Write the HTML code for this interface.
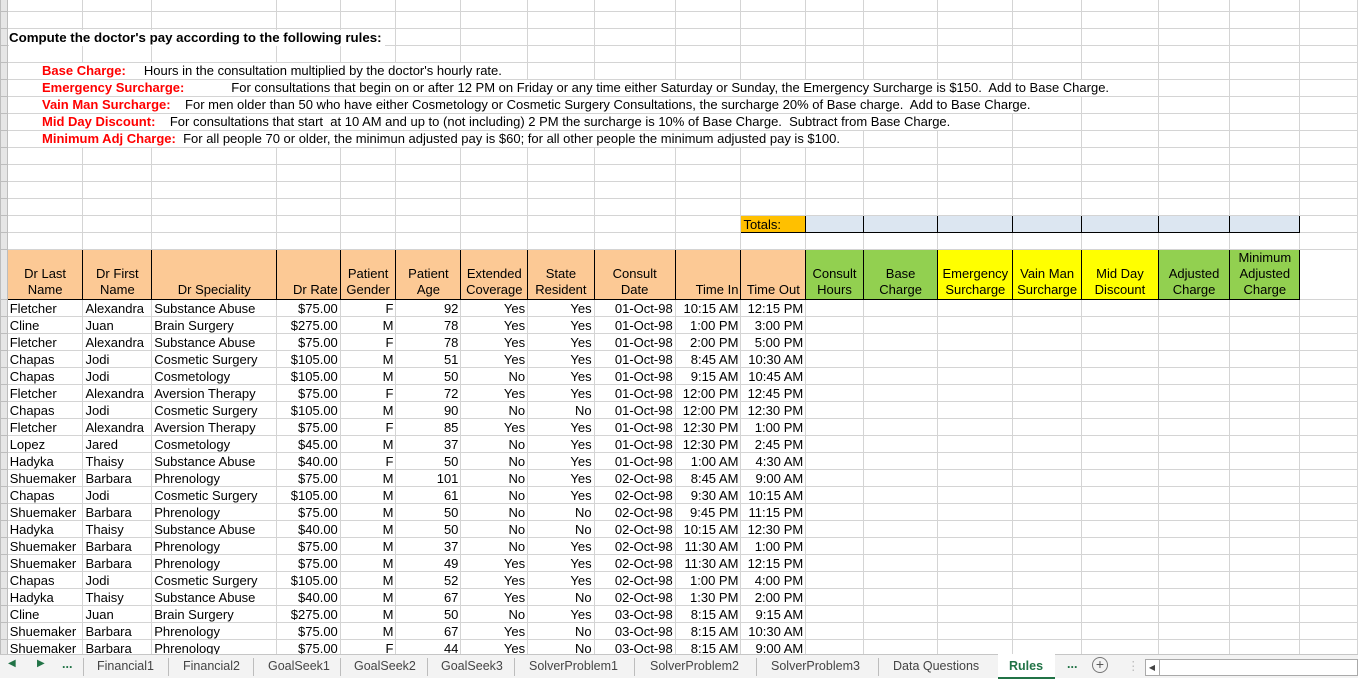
<!DOCTYPE html>
<html><head><meta charset="utf-8"><style>
*{margin:0;padding:0;box-sizing:border-box}
body{width:1358px;height:678px;overflow:hidden;background:#fff;font-family:"Liberation Sans",Arial,sans-serif;font-size:13px;color:#000;position:relative}
table{position:absolute;left:0;top:-6px;border-collapse:collapse;table-layout:fixed}
td{border:1px solid #d4d4d4;height:17px;padding:0 2px;white-space:nowrap;overflow:hidden;line-height:15px;font-size:13px}
td.rh{background:#e6e6e6;border-color:#bdbdbd;padding:0}
.r{text-align:right}
tr.hd td.h{border:1px solid #000;vertical-align:bottom;text-align:center;line-height:16px;white-space:normal;padding-bottom:1px}
.or{background:#fcc995}
.gr{background:#92d050}
.ye{background:#ffff00}
.tot{background:#ffc000;border:1px solid #000!important}
.tb{background:#dce6f1;border:1px solid #000!important}
.ov{position:absolute;background:#fff;white-space:pre;line-height:16px;height:16px}
.lab{color:#ff0000;font-weight:bold;font-size:13px}
.tx{font-size:13px}
#tabs{position:absolute;left:0;top:654px;width:1358px;height:24px;background:#f3f3f3;border-top:1px solid #c6c6c6;font-size:12.5px;color:#444}
#tabs span{position:absolute;top:4px}
.sep{position:absolute;top:3px;width:1px;height:18px;background:#bdbdbd}
</style></head><body>
<table>
<colgroup><col style="width:7px"><col style="width:76px"><col style="width:69px"><col style="width:126px"><col style="width:64px"><col style="width:56px"><col style="width:66px"><col style="width:67px"><col style="width:67px"><col style="width:82px"><col style="width:66px"><col style="width:65px"><col style="width:58px"><col style="width:76px"><col style="width:75px"><col style="width:69px"><col style="width:78px"><col style="width:72px"><col style="width:71px"><col style="width:60px"></colgroup>
<tr><td class="rh"></td><td></td><td></td><td></td><td></td><td></td><td></td><td></td><td></td><td></td><td></td><td></td><td></td><td></td><td></td><td></td><td></td><td></td><td></td><td></td></tr>
<tr><td class="rh"></td><td></td><td></td><td></td><td></td><td></td><td></td><td></td><td></td><td></td><td></td><td></td><td></td><td></td><td></td><td></td><td></td><td></td><td></td><td></td></tr>
<tr><td class="rh"></td><td></td><td></td><td></td><td></td><td></td><td></td><td></td><td></td><td></td><td></td><td></td><td></td><td></td><td></td><td></td><td></td><td></td><td></td><td></td></tr>
<tr><td class="rh"></td><td></td><td></td><td></td><td></td><td></td><td></td><td></td><td></td><td></td><td></td><td></td><td></td><td></td><td></td><td></td><td></td><td></td><td></td><td></td></tr>
<tr><td class="rh"></td><td></td><td></td><td></td><td></td><td></td><td></td><td></td><td></td><td></td><td></td><td></td><td></td><td></td><td></td><td></td><td></td><td></td><td></td><td></td></tr>
<tr><td class="rh"></td><td></td><td></td><td></td><td></td><td></td><td></td><td></td><td></td><td></td><td></td><td></td><td></td><td></td><td></td><td></td><td></td><td></td><td></td><td></td></tr>
<tr><td class="rh"></td><td></td><td></td><td></td><td></td><td></td><td></td><td></td><td></td><td></td><td></td><td></td><td></td><td></td><td></td><td></td><td></td><td></td><td></td><td></td></tr>
<tr><td class="rh"></td><td></td><td></td><td></td><td></td><td></td><td></td><td></td><td></td><td></td><td></td><td></td><td></td><td></td><td></td><td></td><td></td><td></td><td></td><td></td></tr>
<tr><td class="rh"></td><td></td><td></td><td></td><td></td><td></td><td></td><td></td><td></td><td></td><td></td><td></td><td></td><td></td><td></td><td></td><td></td><td></td><td></td><td></td></tr>
<tr><td class="rh"></td><td></td><td></td><td></td><td></td><td></td><td></td><td></td><td></td><td></td><td></td><td></td><td></td><td></td><td></td><td></td><td></td><td></td><td></td><td></td></tr>
<tr><td class="rh"></td><td></td><td></td><td></td><td></td><td></td><td></td><td></td><td></td><td></td><td></td><td></td><td></td><td></td><td></td><td></td><td></td><td></td><td></td><td></td></tr>
<tr><td class="rh"></td><td></td><td></td><td></td><td></td><td></td><td></td><td></td><td></td><td></td><td></td><td></td><td></td><td></td><td></td><td></td><td></td><td></td><td></td><td></td></tr>
<tr><td class="rh"></td><td></td><td></td><td></td><td></td><td></td><td></td><td></td><td></td><td></td><td></td><td></td><td></td><td></td><td></td><td></td><td></td><td></td><td></td><td></td></tr>
<tr><td class="rh"></td><td></td><td></td><td></td><td></td><td></td><td></td><td></td><td></td><td></td><td></td><td class="tot">Totals:</td><td class="tb"></td><td class="tb"></td><td class="tb"></td><td class="tb"></td><td class="tb"></td><td class="tb"></td><td class="tb"></td><td></td></tr>
<tr><td class="rh"></td><td></td><td></td><td></td><td></td><td></td><td></td><td></td><td></td><td></td><td></td><td></td><td></td><td></td><td></td><td></td><td></td><td></td><td></td><td></td></tr>
<tr class="hd" style="height:49px"><td class="rh" style="height:49px"></td><td class="h or">Dr Last<br>Name</td><td class="h or">Dr First<br>Name</td><td class="h or">Dr Speciality</td><td class="h or" style="text-align:right">Dr Rate</td><td class="h or">Patient<br>Gender</td><td class="h or">Patient<br>Age</td><td class="h or">Extended<br>Coverage</td><td class="h or">State<br>Resident</td><td class="h or">Consult<br>Date</td><td class="h or" style="text-align:right">Time In</td><td class="h or">Time Out</td><td class="h gr">Consult<br>Hours</td><td class="h gr">Base<br>Charge</td><td class="h ye">Emergency<br>Surcharge</td><td class="h ye">Vain Man<br>Surcharge</td><td class="h ye">Mid Day<br>Discount</td><td class="h gr">Adjusted<br>Charge</td><td class="h gr">Minimum<br>Adjusted<br>Charge</td><td></td></tr>
<tr><td class="rh"></td><td>Fletcher</td><td>Alexandra</td><td>Substance Abuse</td><td class="r">$75.00</td><td class="r">F</td><td class="r">92</td><td class="r">Yes</td><td class="r">Yes</td><td class="r">01-Oct-98</td><td class="r">10:15 AM</td><td class="r">12:15 PM</td><td></td><td></td><td></td><td></td><td></td><td></td><td></td><td></td></tr>
<tr><td class="rh"></td><td>Cline</td><td>Juan</td><td>Brain Surgery</td><td class="r">$275.00</td><td class="r">M</td><td class="r">78</td><td class="r">Yes</td><td class="r">Yes</td><td class="r">01-Oct-98</td><td class="r">1:00 PM</td><td class="r">3:00 PM</td><td></td><td></td><td></td><td></td><td></td><td></td><td></td><td></td></tr>
<tr><td class="rh"></td><td>Fletcher</td><td>Alexandra</td><td>Substance Abuse</td><td class="r">$75.00</td><td class="r">F</td><td class="r">78</td><td class="r">Yes</td><td class="r">Yes</td><td class="r">01-Oct-98</td><td class="r">2:00 PM</td><td class="r">5:00 PM</td><td></td><td></td><td></td><td></td><td></td><td></td><td></td><td></td></tr>
<tr><td class="rh"></td><td>Chapas</td><td>Jodi</td><td>Cosmetic Surgery</td><td class="r">$105.00</td><td class="r">M</td><td class="r">51</td><td class="r">Yes</td><td class="r">Yes</td><td class="r">01-Oct-98</td><td class="r">8:45 AM</td><td class="r">10:30 AM</td><td></td><td></td><td></td><td></td><td></td><td></td><td></td><td></td></tr>
<tr><td class="rh"></td><td>Chapas</td><td>Jodi</td><td>Cosmetology</td><td class="r">$105.00</td><td class="r">M</td><td class="r">50</td><td class="r">No</td><td class="r">Yes</td><td class="r">01-Oct-98</td><td class="r">9:15 AM</td><td class="r">10:45 AM</td><td></td><td></td><td></td><td></td><td></td><td></td><td></td><td></td></tr>
<tr><td class="rh"></td><td>Fletcher</td><td>Alexandra</td><td>Aversion Therapy</td><td class="r">$75.00</td><td class="r">F</td><td class="r">72</td><td class="r">Yes</td><td class="r">Yes</td><td class="r">01-Oct-98</td><td class="r">12:00 PM</td><td class="r">12:45 PM</td><td></td><td></td><td></td><td></td><td></td><td></td><td></td><td></td></tr>
<tr><td class="rh"></td><td>Chapas</td><td>Jodi</td><td>Cosmetic Surgery</td><td class="r">$105.00</td><td class="r">M</td><td class="r">90</td><td class="r">No</td><td class="r">No</td><td class="r">01-Oct-98</td><td class="r">12:00 PM</td><td class="r">12:30 PM</td><td></td><td></td><td></td><td></td><td></td><td></td><td></td><td></td></tr>
<tr><td class="rh"></td><td>Fletcher</td><td>Alexandra</td><td>Aversion Therapy</td><td class="r">$75.00</td><td class="r">F</td><td class="r">85</td><td class="r">Yes</td><td class="r">Yes</td><td class="r">01-Oct-98</td><td class="r">12:30 PM</td><td class="r">1:00 PM</td><td></td><td></td><td></td><td></td><td></td><td></td><td></td><td></td></tr>
<tr><td class="rh"></td><td>Lopez</td><td>Jared</td><td>Cosmetology</td><td class="r">$45.00</td><td class="r">M</td><td class="r">37</td><td class="r">No</td><td class="r">Yes</td><td class="r">01-Oct-98</td><td class="r">12:30 PM</td><td class="r">2:45 PM</td><td></td><td></td><td></td><td></td><td></td><td></td><td></td><td></td></tr>
<tr><td class="rh"></td><td>Hadyka</td><td>Thaisy</td><td>Substance Abuse</td><td class="r">$40.00</td><td class="r">F</td><td class="r">50</td><td class="r">No</td><td class="r">Yes</td><td class="r">01-Oct-98</td><td class="r">1:00 AM</td><td class="r">4:30 AM</td><td></td><td></td><td></td><td></td><td></td><td></td><td></td><td></td></tr>
<tr><td class="rh"></td><td>Shuemaker</td><td>Barbara</td><td>Phrenology</td><td class="r">$75.00</td><td class="r">M</td><td class="r">101</td><td class="r">No</td><td class="r">Yes</td><td class="r">02-Oct-98</td><td class="r">8:45 AM</td><td class="r">9:00 AM</td><td></td><td></td><td></td><td></td><td></td><td></td><td></td><td></td></tr>
<tr><td class="rh"></td><td>Chapas</td><td>Jodi</td><td>Cosmetic Surgery</td><td class="r">$105.00</td><td class="r">M</td><td class="r">61</td><td class="r">No</td><td class="r">Yes</td><td class="r">02-Oct-98</td><td class="r">9:30 AM</td><td class="r">10:15 AM</td><td></td><td></td><td></td><td></td><td></td><td></td><td></td><td></td></tr>
<tr><td class="rh"></td><td>Shuemaker</td><td>Barbara</td><td>Phrenology</td><td class="r">$75.00</td><td class="r">M</td><td class="r">50</td><td class="r">No</td><td class="r">No</td><td class="r">02-Oct-98</td><td class="r">9:45 PM</td><td class="r">11:15 PM</td><td></td><td></td><td></td><td></td><td></td><td></td><td></td><td></td></tr>
<tr><td class="rh"></td><td>Hadyka</td><td>Thaisy</td><td>Substance Abuse</td><td class="r">$40.00</td><td class="r">M</td><td class="r">50</td><td class="r">No</td><td class="r">No</td><td class="r">02-Oct-98</td><td class="r">10:15 AM</td><td class="r">12:30 PM</td><td></td><td></td><td></td><td></td><td></td><td></td><td></td><td></td></tr>
<tr><td class="rh"></td><td>Shuemaker</td><td>Barbara</td><td>Phrenology</td><td class="r">$75.00</td><td class="r">M</td><td class="r">37</td><td class="r">No</td><td class="r">Yes</td><td class="r">02-Oct-98</td><td class="r">11:30 AM</td><td class="r">1:00 PM</td><td></td><td></td><td></td><td></td><td></td><td></td><td></td><td></td></tr>
<tr><td class="rh"></td><td>Shuemaker</td><td>Barbara</td><td>Phrenology</td><td class="r">$75.00</td><td class="r">M</td><td class="r">49</td><td class="r">Yes</td><td class="r">Yes</td><td class="r">02-Oct-98</td><td class="r">11:30 AM</td><td class="r">12:15 PM</td><td></td><td></td><td></td><td></td><td></td><td></td><td></td><td></td></tr>
<tr><td class="rh"></td><td>Chapas</td><td>Jodi</td><td>Cosmetic Surgery</td><td class="r">$105.00</td><td class="r">M</td><td class="r">52</td><td class="r">Yes</td><td class="r">Yes</td><td class="r">02-Oct-98</td><td class="r">1:00 PM</td><td class="r">4:00 PM</td><td></td><td></td><td></td><td></td><td></td><td></td><td></td><td></td></tr>
<tr><td class="rh"></td><td>Hadyka</td><td>Thaisy</td><td>Substance Abuse</td><td class="r">$40.00</td><td class="r">M</td><td class="r">67</td><td class="r">Yes</td><td class="r">No</td><td class="r">02-Oct-98</td><td class="r">1:30 PM</td><td class="r">2:00 PM</td><td></td><td></td><td></td><td></td><td></td><td></td><td></td><td></td></tr>
<tr><td class="rh"></td><td>Cline</td><td>Juan</td><td>Brain Surgery</td><td class="r">$275.00</td><td class="r">M</td><td class="r">50</td><td class="r">No</td><td class="r">Yes</td><td class="r">03-Oct-98</td><td class="r">8:15 AM</td><td class="r">9:15 AM</td><td></td><td></td><td></td><td></td><td></td><td></td><td></td><td></td></tr>
<tr><td class="rh"></td><td>Shuemaker</td><td>Barbara</td><td>Phrenology</td><td class="r">$75.00</td><td class="r">M</td><td class="r">67</td><td class="r">Yes</td><td class="r">No</td><td class="r">03-Oct-98</td><td class="r">8:15 AM</td><td class="r">10:30 AM</td><td></td><td></td><td></td><td></td><td></td><td></td><td></td><td></td></tr>
<tr><td class="rh"></td><td>Shuemaker</td><td>Barbara</td><td>Phrenology</td><td class="r">$75.00</td><td class="r">F</td><td class="r">44</td><td class="r">Yes</td><td class="r">No</td><td class="r">03-Oct-98</td><td class="r">8:15 AM</td><td class="r">9:00 AM</td><td></td><td></td><td></td><td></td><td></td><td></td><td></td><td></td></tr>
</table>

<div class="ov" style="left:9px;top:30px;font-weight:bold;font-size:13.3px;padding-right:3px">Compute the doctor's pay according to the following rules:</div>
<div class="ov" style="left:8px;top:63px;padding-left:34px"><span class="lab">Base Charge:</span><span class="tx">     Hours in the consultation multiplied by the doctor's hourly rate.</span></div>
<div class="ov" style="left:8px;top:80px;padding-left:34px"><span class="lab">Emergency Surcharge:</span><span class="tx">             For consultations that begin on or after 12 PM on Friday or any time either Saturday or Sunday, the Emergency Surcharge is $150.  Add to Base Charge.</span></div>
<div class="ov" style="left:8px;top:97px;padding-left:34px"><span class="lab">Vain Man Surcharge:</span><span class="tx">    For men older than 50 who have either Cosmetology or Cosmetic Surgery Consultations, the surcharge 20% of Base charge.  Add to Base Charge.</span></div>
<div class="ov" style="left:8px;top:114px;padding-left:34px"><span class="lab">Mid Day Discount:</span><span class="tx">    For consultations that start  at 10 AM and up to (not including) 2 PM the surcharge is 10% of Base Charge.  Subtract from Base Charge.</span></div>
<div class="ov" style="left:8px;top:131px;padding-left:34px"><span class="lab">Minimum Adj Charge:</span><span class="tx">  For all people 70 or older, the minimun adjusted pay is $60; for all other people the minimum adjusted pay is $100.</span></div>

<div id="tabs">
<span style="left:8px;top:3px;color:#217346;font-size:10px">&#9664;</span>
<span style="left:37px;top:3px;color:#217346;font-size:10px">&#9654;</span>
<span style="left:62px;top:2px;color:#217346;font-weight:bold">...</span>
<div class="sep" style="left:83px"></div>
<span style="left:97px">Financial1</span>
<div class="sep" style="left:168px"></div>
<span style="left:183px">Financial2</span>
<div class="sep" style="left:253px"></div>
<span style="left:268px">GoalSeek1</span>
<div class="sep" style="left:340px"></div>
<span style="left:354px">GoalSeek2</span>
<div class="sep" style="left:427px"></div>
<span style="left:441px">GoalSeek3</span>
<div class="sep" style="left:514px"></div>
<span style="left:529px">SolverProblem1</span>
<div class="sep" style="left:634px"></div>
<span style="left:650px">SolverProblem2</span>
<div class="sep" style="left:756px"></div>
<span style="left:771px">SolverProblem3</span>
<div class="sep" style="left:878px"></div>
<span style="left:893px">Data Questions</span>
<div style="position:absolute;left:998px;top:-1px;width:57px;height:25px;background:#fff;border-bottom:2px solid #217346"></div>
<span style="left:1009px;font-weight:bold;color:#217346">Rules</span>
<span style="left:1067px;top:2px;color:#217346;font-weight:bold">...</span>
<span style="left:1092px;top:2px;width:16px;height:16px;border:1px solid #777;border-radius:50%;text-align:center;line-height:13px;font-size:14px;color:#555">+</span>
<span style="left:1127px;top:3px;color:#bbb">&#8942;</span>
<div style="position:absolute;left:1145px;top:4px;width:213px;height:17px;background:#fff;border:1px solid #aaa"></div>
<div style="position:absolute;left:1145px;top:4px;width:15px;height:17px;border-right:1px solid #aaa;font-size:8px;line-height:17px;text-align:center;color:#444">&#9664;</div>
</div>
</body></html>
